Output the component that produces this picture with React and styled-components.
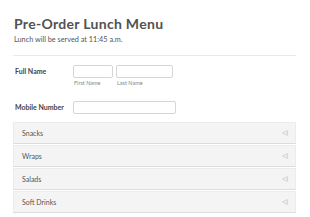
import styled, { createGlobalStyle } from "styled-components";

const GlobalStyle = createGlobalStyle`
  body {
    margin: 0;
    background: #fff;
    font-family: Lato, "Open Sans", sans-serif;
    color: #444;
  }
`;

const Page = styled.div`
  width: 283px;
  padding: 16px 0 0 13px;
`;

const Title = styled.h1`
  margin: 0 0 0 1px;
  font-size: 14px;
  line-height: 16px;
  font-weight: 700;
  letter-spacing: 0.3px;
  color: #525252;
`;

const Subtitle = styled.p`
  margin: 3px 0 0 1px;
  font-size: 7.3px;
  line-height: 9px;
  color: #555;
`;

const Divider = styled.hr`
  margin: 11px 0 0;
  border: 0;
  border-top: 1px solid #eaeaea;
  height: 0;
`;

const FieldRow = styled.div`
  display: flex;
  padding-left: 2px;
  margin-top: ${(p) => p.$top}px;
`;

const Label = styled.label`
  width: 58px;
  font-size: 7px;
  font-weight: 700;
  line-height: 13px;
  color: #444;
`;

const Inputs = styled.div`
  display: flex;
  gap: 3px;
`;

const Field = styled.div`
  display: flex;
  flex-direction: column;
`;

const Input = styled.input`
  box-sizing: border-box;
  width: ${(p) => p.$w}px;
  height: 13px;
  border: 1px solid #d6d6d6;
  border-radius: 2px;
  background: #fff;
  padding: 0;
  margin: 0;
`;

const SubLabel = styled.span`
  font-size: 5.5px;
  line-height: 6px;
  margin-top: 2px;
  padding-left: 1px;
  color: #888;
`;

const Accordion = styled.div`
  display: flex;
  flex-direction: column;
  gap: 1px;
  margin-top: 8px;
`;

const Section = styled.div`
  box-sizing: border-box;
  height: 22px;
  display: flex;
  align-items: center;
  justify-content: space-between;
  padding: 0 7px 0 8px;
  background: #f4f4f4;
  border: 1px solid #ececec;
  border-bottom-color: #dcdcdc;
  font-size: 7px;
  color: #555;
`;

const Arrow = () => (
  <svg width="6" height="6" viewBox="0 0 6 6">
    <path d="M5.5 0.5 L0.5 3 L5.5 5.5 Z" fill="#ececec" stroke="#d2d2d2" strokeWidth="0.8" strokeLinejoin="round" />
  </svg>
);

const sections = ["Snacks", "Wraps", "Salads", "Soft Drinks"];

export default function App() {
  return (
    <>
      <GlobalStyle />
      <Page>
        <Title>Pre-Order Lunch Menu</Title>
        <Subtitle>Lunch will be served at 11:45 a.m.</Subtitle>
        <Divider />
        <FieldRow $top={9}>
          <Label>Full Name</Label>
          <Inputs>
            <Field>
              <Input $w={40} />
              <SubLabel>First Name</SubLabel>
            </Field>
            <Field>
              <Input $w={57} />
              <SubLabel>Last Name</SubLabel>
            </Field>
          </Inputs>
        </FieldRow>
        <FieldRow $top={15}>
          <Label>Mobile Number</Label>
          <Input $w={103} />
        </FieldRow>
        <Accordion>
          {sections.map((s) => (
            <Section key={s}>
              <span>{s}</span>
              <Arrow />
            </Section>
          ))}
        </Accordion>
      </Page>
    </>
  );
}
